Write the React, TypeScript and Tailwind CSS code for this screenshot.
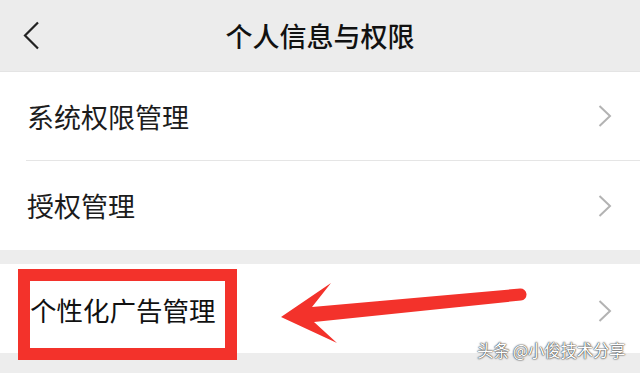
import React from "react";

const font = { fontFamily: '"Noto Sans CJK SC", "Noto Sans", sans-serif' };

function ChevronRight() {
  return (
    <svg width="14" height="22" viewBox="0 0 14 22" className="shrink-0">
      <polyline points="1.5,1 12,11 1.5,21" fill="none" stroke="#b3b3b3" strokeWidth="2" strokeLinejoin="miter" />
    </svg>
  );
}

function Row({ label }: { label: string }) {
  return (
    <div className="flex h-full items-center justify-between pl-[27px] pr-[28px]">
      <span className="text-[27px] leading-none text-[#1c1c1c]">{label}</span>
      <ChevronRight />
    </div>
  );
}

export default function App() {
  return (
    <div className="relative h-[373px] w-[640px] overflow-hidden bg-[#ededed]" style={font}>
      <div className="grid h-[72px] grid-cols-[80px_1fr_80px] items-center bg-[#ececec] border-b border-[#e4e4e4]">
        <div className="pl-[23px] pt-[1px]">
          <svg width="18" height="30" viewBox="0 0 18 30">
            <polyline points="15,1.5 2,14.5 15,27.5" fill="none" stroke="#222" strokeWidth="2.2" />
          </svg>
        </div>
        <div className="text-center text-[27px] font-medium leading-none text-[#111]">个人信息与权限</div>
        <div />
      </div>
      <div className="bg-white">
        <div className="h-[88px]">
          <Row label="系统权限管理" />
        </div>
        <div className="ml-[26px] h-px bg-[#e5e5e5]" />
        <div className="h-[89px]">
          <Row label="授权管理" />
        </div>
      </div>
      <div className="h-[14px]" />
      <div className="h-[89px] bg-white">
        <div className="flex h-full items-center justify-between pl-[30px] pr-[28px] pt-[4px]">
          <span className="text-[26.5px] leading-none text-[#111]">个性化广告管理</span>
          <ChevronRight />
        </div>
      </div>

      <div className="absolute left-[18px] top-[269px] h-[91px] w-[219px] border-[12px] border-[#f3322b]" />
      <svg className="absolute left-0 top-0" width="640" height="373" viewBox="0 0 640 373">
        <path
          d="M281 317 L331 283 L312 307 L520 288.5 A6 6 0 0 1 521 300.5 L314 322 L337 343 Z"
          fill="#f3322b"
        />
      </svg>
      <div className="absolute left-[477px] top-[342px] whitespace-nowrap text-[16.5px] leading-none tracking-[-0.3px] text-white [text-shadow:0_0_2px_#333,0_0_1px_#000]">
        头条 @小俊技术分享
      </div>
    </div>
  );
}
